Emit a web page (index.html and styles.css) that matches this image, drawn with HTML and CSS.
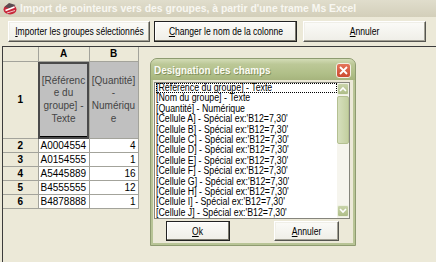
FILE: index.html
```html
<!DOCTYPE html>
<html lang="fr">
<head>
    <meta charset="UTF-8" />
    <title>Import de pointeurs vers des groupes</title>
    <link rel="stylesheet" href="styles.css">
</head>
<body>
<div class="window">
    <div class="title-bar">
        <svg class="app-icon" width="14" height="13" viewBox="0 0 14 13">
            <ellipse cx="7" cy="7.5" rx="6.5" ry="5" fill="#c8283a"/>
            <path d="M1.5 5 L6 1 L12.5 3 L8 6.5 Z" fill="#5c4b50"/>
            <path d="M2.5 8.5 L11.5 5" stroke="#ffffff" stroke-width="1.6"/>
            <path d="M4 11 L12 8.5" stroke="#f1c4c9" stroke-width="1"/>
        </svg>
        <span class="title-text">Import de pointeurs vers des groupes, à partir d'une trame Ms Excel</span>
    </div>

    <div class="toolbar">
        <button class="btn btn-import"><span class="label"><u>I</u>mporter les groupes sélectionnés</span></button>
        <button class="btn btn-default btn-rename"><span class="label"><u>C</u>hanger le nom de la colonne</span></button>
        <button class="btn btn-cancel"><span class="label"><u>A</u>nnuler</span></button>
    </div>

    <div class="sheet">
        <table class="grid">
            <colgroup>
                <col class="col-head">
                <col class="col-a">
                <col class="col-b">
            </colgroup>
            <tr class="row-head">
                <th></th><th>A</th><th>B</th>
            </tr>
            <tr class="row-fields">
                <th>1</th>
                <td class="field current">[Référenc<br>e du<br>groupe] -<br>Texte</td>
                <td class="field">[Quantité]<br>-<br>Numériqu<br>e</td>
            </tr>
            <tr><th>2</th><td>A0004554</td><td class="num">4</td></tr>
            <tr><th>3</th><td>A0154555</td><td class="num">1</td></tr>
            <tr><th>4</th><td>A5445889</td><td class="num">16</td></tr>
            <tr><th>5</th><td>B4555555</td><td class="num">12</td></tr>
            <tr><th>6</th><td>B4878888</td><td class="num">1</td></tr>
        </table>
    </div>

    <div class="dialog">
        <div class="dialog-title">
            <span class="dialog-caption">Designation des champs</span>
            <span class="close-btn">
                <svg width="9" height="9" viewBox="0 0 9 9">
                    <path d="M1 1 L8 8 M8 1 L1 8" stroke="#ffffff" stroke-width="1.8"/>
                </svg>
            </span>
        </div>
        <div class="dialog-body">
            <div class="listbox">
                <ul class="items">
                    <li class="focused"><span>[Référence du groupe] - Texte</span></li>
                    <li><span>[Nom du groupe] - Texte</span></li>
                    <li><span>[Quantité] - Numérique</span></li>
                    <li><span>[Cellule A] - Spécial ex:'B12=7,30'</span></li>
                    <li><span>[Cellule B] - Spécial ex:'B12=7,30'</span></li>
                    <li><span>[Cellule C] - Spécial ex:'B12=7,30'</span></li>
                    <li><span>[Cellule D] - Spécial ex:'B12=7,30'</span></li>
                    <li><span>[Cellule E] - Spécial ex:'B12=7,30'</span></li>
                    <li><span>[Cellule F] - Spécial ex:'B12=7,30'</span></li>
                    <li><span>[Cellule G] - Spécial ex:'B12=7,30'</span></li>
                    <li><span>[Cellule H] - Spécial ex:'B12=7,30'</span></li>
                    <li><span>[Cellule I] - Spécial ex:'B12=7,30'</span></li>
                    <li><span>[Cellule J] - Spécial ex:'B12=7,30'</span></li>
                </ul>
                <div class="scrollbar">
                    <span class="scroll-btn">
                        <svg width="8" height="6" viewBox="0 0 8 6"><path d="M1 5 L4 2 L7 5" fill="none" stroke="#ffffff" stroke-width="1.6"/></svg>
                    </span>
                    <span class="scroll-thumb"></span>
                    <span class="scroll-track"></span>
                    <span class="scroll-btn">
                        <svg width="8" height="6" viewBox="0 0 8 6"><path d="M1 1 L4 4 L7 1" fill="none" stroke="#ffffff" stroke-width="1.6"/></svg>
                    </span>
                </div>
            </div>
            <div class="dialog-actions">
                <button class="btn btn-default btn-ok"><span class="label"><u>O</u>k</span></button>
                <button class="btn btn-annuler"><span class="label"><u>A</u>nnuler</span></button>
            </div>
        </div>
    </div>
</div>
</body>
</html>
```

FILE: styles.css
```css
body {
    margin: 0;
    background: #ece9d8;
    font-family: 'Liberation Sans', Arial, sans-serif;
    overflow: hidden;
}
.window {
    position: relative;
    width: 436px;
    height: 262px;
    overflow: hidden;
}

/* title bar */
.title-bar {
    height: 17px;
    display: flex;
    align-items: center;
    gap: 3px;
    padding-left: 3px;
    background: linear-gradient(#e0ddcc, #d3cfba);
}
.title-text {
    color: #f8f7f1;
    font-weight: bold;
    font-size: 10.4px;
    white-space: nowrap;
}

/* buttons */
.toolbar {
    height: 29px;
    box-sizing: border-box;
    padding: 4px 0 0 8px;
    display: flex;
    align-items: flex-start;
}
.btn {
    height: 21px;
    padding: 0;
    font-family: 'Liberation Sans', sans-serif;
    font-size: 10.2px;
    color: #000;
    background: linear-gradient(#fbfbf8, #efeee7);
    border: 1px solid;
    border-color: #ffffff #555550 #555550 #ffffff;
    box-shadow: inset -1px -1px 0 #a3a195, inset 1px 1px 0 #f0efe8;
    white-space: nowrap;
}
.btn .label {
    display: inline-block;
    transform: scaleX(0.84);
    margin: 0 -12px;
}
.btn-default {
    border-color: #222;
    box-shadow: inset -1px -1px 0 #7a786c, inset 1px 1px 0 #ffffff;
}
.btn-import {
    width: 142px;
}
.btn-rename {
    width: 143px;
    margin-left: 4px;
}
.btn-cancel {
    width: 123px;
    margin-left: 6px;
}

/* spreadsheet */
.sheet {
    margin-left: 2px;
    height: 216px;
    border-left: 1px solid #3c3c3c;
    border-top: 1px solid #3c3c3c;
}
.grid {
    border-collapse: collapse;
    table-layout: fixed;
    width: 135px;
    font-size: 10px;
}
.col-head {
    width: 35px;
}
.col-a {
    width: 51px;
}
.col-b {
    width: 49px;
}
.grid th,
.grid td {
    border: 1px solid #a3a39b;
    padding: 0;
    height: 13px;
    line-height: 12px;
    white-space: nowrap;
    overflow: hidden;
}
.grid th {
    background: #ece9d8;
    font-weight: bold;
    text-align: center;
}
.grid tr:first-child th {
    border-top: none;
}
.grid tr th:first-child {
    border-left: none;
}
.grid td {
    background: #fff;
    padding-left: 2px;
}
.grid td.num {
    text-align: right;
    padding: 0 2px 0 0;
}
.row-head th {
    height: 14px;
}
.row-fields th,
.row-fields td {
    height: 76px;
}
.grid td.field {
    background: #c0c0c0;
    color: #454545;
    text-align: center;
    line-height: 12.7px;
    padding: 0;
}
.grid td.current {
    outline: 2px solid #4a4a4a;
    outline-offset: -2px;
    box-shadow: inset 0 -2px 0 #000;
}

/* dialog */
.dialog {
    position: absolute;
    left: 150px;
    top: 58px;
    width: 206px;
    height: 188px;
    box-sizing: border-box;
    border: 1px solid #8e9b70;
    border-radius: 7px 7px 0 0;
    background: #b8c496;
    padding: 0 2px 2px;
    display: flex;
    flex-direction: column;
}
.dialog-title {
    height: 21px;
    margin: 0 -2px;
    flex-shrink: 0;
    border-radius: 6px 6px 0 0;
    background: linear-gradient(#d3dcb6 0, #bcc897 25%, #b0bf88 70%, #a6b47d 100%);
    display: flex;
    align-items: center;
    justify-content: space-between;
    padding: 0 4px 0 3px;
    color: #fbfbf4;
    font-weight: bold;
    font-size: 11px;
    text-shadow: 1px 1px 0 #85935f;
}
.dialog-caption {
    display: inline-block;
    white-space: nowrap;
    transform: scaleX(0.9);
    transform-origin: 0 50%;
}
.close-btn {
    width: 15px;
    height: 15px;
    box-sizing: border-box;
    border: 1px solid #f2efe4;
    border-radius: 3px;
    background: linear-gradient(#e4765a, #cc4a30);
    display: flex;
    align-items: center;
    justify-content: center;
    margin-top: 2px;
}
.dialog-body {
    flex: 1;
    background: #ece9d8;
    padding: 2px 2px 0 1px;
}
.listbox {
    width: 196px;
    height: 137px;
    box-sizing: border-box;
    border: 1px solid #85857c;
    background: #fff;
    display: flex;
}
.items {
    flex: 1;
    margin: 0;
    padding: 0 0 0 1px;
    list-style: none;
    font-size: 10px;
    line-height: 10.4px;
    overflow: hidden;
}
.items li {
    height: 10.4px;
    white-space: nowrap;
}
.items li span {
    display: inline-block;
    transform: scaleX(0.88);
    transform-origin: 0 50%;
}
.items li.focused {
    outline: 1px dotted #000;
    outline-offset: -1px;
}
.scrollbar {
    width: 12px;
    display: flex;
    flex-direction: column;
    background: #f6f5ee;
    padding-bottom: 1px;
}
.scroll-btn {
    height: 12px;
    box-sizing: border-box;
    border: 1px solid #eef1e2;
    border-radius: 2px;
    background: linear-gradient(#c9d4aa, #aebd88);
    display: flex;
    align-items: center;
    justify-content: center;
}
.scroll-thumb {
    height: 48px;
    margin-top: 1px;
    box-sizing: border-box;
    border: 1px solid #b4c091;
    border-radius: 2px;
    background: linear-gradient(90deg, #d6dfbd, #c3cfa0);
}
.scroll-track {
    flex: 1;
}
.dialog-actions {
    display: flex;
    padding: 2px 0 0 12px;
}
.btn-ok {
    width: 64px;
    height: 20px;
}
.btn-annuler {
    width: 65px;
    height: 20px;
    margin-left: 44px;
}
```
